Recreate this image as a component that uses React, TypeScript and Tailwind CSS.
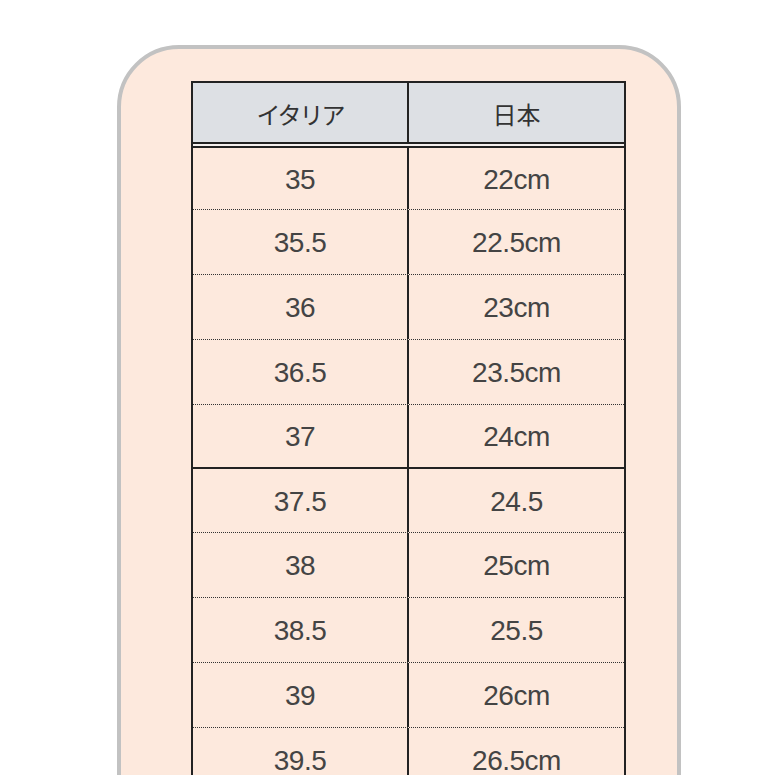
import React from "react";

const rows: [string, string, string][] = [
  ["35", "22cm", "h-[62px]"],
  ["35.5", "22.5cm", "h-[65px]"],
  ["36", "23cm", "h-[65px]"],
  ["36.5", "23.5cm", "h-[65px]"],
  ["37", "24cm", "h-[64px]"],
  ["37.5", "24.5", "h-[64px]"],
  ["38", "25cm", "h-[65px]"],
  ["38.5", "25.5", "h-[65px]"],
  ["39", "26cm", "h-[65px]"],
  ["39.5", "26.5cm", "h-[65px]"],
];

export default function App() {
  return (
    <div className="w-[775px] h-[775px] overflow-hidden bg-white">
      <div className="ml-[117px] mt-[45px] w-[564px] h-[800px] rounded-[62px] border-4 border-[#c2c2c2] bg-[#fde9dd] pt-[32px] pl-[70px]">
        <div className="w-[435px] border-x-2 border-t-2 border-[#222]">
          <div
            className="grid grid-cols-[216px_1fr] h-[61px] bg-[#dde0e4] border-b-2 border-[#222] text-[#333] text-[24px]"
            style={{ fontFamily: '"Noto Sans CJK JP", sans-serif' }}
          >
            <div className="flex items-center justify-center border-r-2 border-[#222] tracking-[-2px] pt-[2px]">イタリア</div>
            <div className="flex items-center justify-center pt-[2px]">日本</div>
          </div>
          <div className="h-[2px] bg-[#f5f0ee]" />
          <div className="border-t-2 border-[#222]">
            {rows.map(([a, b, h], i) => (
              <div
                key={a}
                className={
                  "grid grid-cols-[216px_1fr] text-[#444] text-[28px] tracking-[-0.5px] " +
                  h +
                  " " +
                  (i === 4 ? "border-b-2 border-solid border-[#222]" : "border-b border-dotted border-[#333]")
                }
                style={{ fontFamily: '"Liberation Sans", Arial, sans-serif' }}
              >
                <div className="flex items-center justify-center border-r-2 border-[#222] pt-[2px]">{a}</div>
                <div className="flex items-center justify-center pt-[2px]">{b}</div>
              </div>
            ))}
          </div>
        </div>
      </div>
    </div>
  );
}
